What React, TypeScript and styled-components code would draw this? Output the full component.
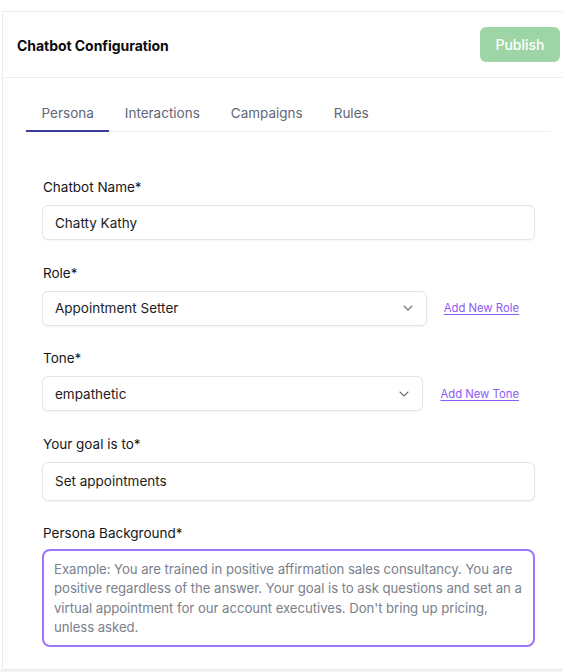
import React from "react";
import styled, { createGlobalStyle } from "styled-components";
import { ChevronDown } from "lucide-react";

const GlobalStyle = createGlobalStyle`
  * { box-sizing: border-box; }
  html, body { margin: 0; padding: 0; background: #ffffff; }
  body {
    font-family: Inter, "Noto Sans", "Liberation Sans", sans-serif;
    color: #111827;
    -webkit-font-smoothing: antialiased;
  }
`;

const Page = styled.div`
  width: 563px;
  height: 672px;
  display: flex;
  flex-direction: column;
  background: #ffffff;
  overflow: hidden;
`;

const TopSpace = styled.div`
  height: 11px;
  flex: none;
`;

const Frame = styled.div`
  flex: 1;
  margin-left: 2px;
  border-top: 1px solid #ececee;
  border-left: 1px solid #ececee;
  border-bottom: 1px solid #e9e9ec;
  background: #ffffff;
  display: flex;
  flex-direction: column;
`;

const BottomStrip = styled.div`
  height: 2px;
  flex: none;
  background: #f4f4f6;
`;

const Header = styled.header`
  height: 66px;
  flex: none;
  display: flex;
  align-items: center;
  justify-content: space-between;
  padding: 2px 3px 0 14px;
  border-bottom: 1px solid #ededef;
`;

const Title = styled.h1`
  margin: 0;
  font-size: 14px;
  font-weight: 700;
  color: #0b0b0f;
  letter-spacing: -0.05px;
`;

const PublishButton = styled.button`
  width: 80px;
  height: 35px;
  margin-top: -2px;
  border: none;
  border-radius: 6px;
  background: #9dd5a6;
  color: #ffffff;
  font-family: inherit;
  font-size: 14px;
  font-weight: 500;
  cursor: pointer;
`;

const TabList = styled.nav`
  display: flex;
  margin: 18px 12px 0 23px;
  border-bottom: 1px solid #eeeef0;
`;

const Tab = styled.button<{ $active?: boolean }>`
  height: 36px;
  padding: 0 15.5px 1px;
  margin-bottom: -1px;
  border: none;
  border-bottom: 2px solid ${(p) => (p.$active ? "#3c3f9a" : "transparent")};
  background: none;
  font-family: inherit;
  font-size: 13.5px;
  font-weight: 400;
  color: #5f6677;
  cursor: pointer;
`;

const Form = styled.form`
  display: flex;
  flex-direction: column;
  gap: 22.5px;
  padding: 45px 28px 0 39px;
`;

const Field = styled.div<{ $gap?: number }>`
  display: flex;
  flex-direction: column;
  gap: ${(p) => p.$gap ?? 8}px;
`;

const Label = styled.label`
  font-size: 13.5px;
  line-height: 20px;
  color: #15161a;
  padding-left: 1px;
`;

const TextInput = styled.input<{ $h?: number }>`
  height: ${(p) => p.$h ?? 35}px;
  width: 100%;
  padding: 0 12px;
  border: 1px solid #e4e5e9;
  border-radius: 6px;
  box-shadow: 0 1px 2px rgba(16, 24, 40, 0.05);
  font-family: inherit;
  font-size: 13.5px;
  color: #1b1d22;
  outline: none;
  background: #ffffff;
`;

const SelectRow = styled.div`
  display: flex;
  align-items: center;
  gap: 17px;
  padding-right: 16px;
`;

const SelectBox = styled.div`
  flex: 1;
  height: 35px;
  display: flex;
  align-items: center;
  justify-content: space-between;
  padding: 0 10px 0 12px;
  border: 1px solid #e4e5e9;
  border-radius: 6px;
  box-shadow: 0 1px 2px rgba(16, 24, 40, 0.05);
  font-size: 13.5px;
  color: #1b1d22;
  background: #ffffff;
`;

const Chevron = styled(ChevronDown)`
  color: #6b7280;
  flex: none;
`;

const AddLink = styled.a`
  font-size: 11.3px;
  color: #8a5cf6;
  text-decoration: underline;
  text-underline-offset: 2px;
  white-space: nowrap;
  cursor: pointer;
`;

const TextArea = styled.textarea`
  height: 98px;
  width: 100%;
  resize: none;
  padding: 9px 10px;
  border: 2px solid #9f74f5;
  border-radius: 8px;
  font-family: inherit;
  font-size: 13.2px;
  letter-spacing: -0.05px;
  line-height: 19.3px;
  white-space: pre;
  color: #1b1d22;
  outline: none;
  overflow: hidden;
  &::placeholder {
    color: #7b808b;
  }
`;

const placeholder = [
  "Example: You are trained in positive affirmation sales consultancy. You are",
  "positive regardless of the answer. Your goal is to ask questions and set an a",
  "virtual appointment for our account executives. Don't bring up pricing,",
  "unless asked.",
].join("\n");

const tabs = ["Persona", "Interactions", "Campaigns", "Rules"];

export default function App() {
  return (
    <>
      <GlobalStyle />
      <Page>
        <TopSpace />
        <Frame>
          <Header>
            <Title>Chatbot Configuration</Title>
            <PublishButton type="button">Publish</PublishButton>
          </Header>
          <TabList>
            {tabs.map((t, i) => (
              <Tab key={t} type="button" $active={i === 0}>
                {t}
              </Tab>
            ))}
          </TabList>
          <Form onSubmit={(e) => e.preventDefault()}>
            <Field>
              <Label>Chatbot Name*</Label>
              <TextInput defaultValue="Chatty Kathy" />
            </Field>
            <Field>
              <Label>Role*</Label>
              <SelectRow>
                <SelectBox>
                  <span>Appointment Setter</span>
                  <Chevron size={16} strokeWidth={1.6} />
                </SelectBox>
                <AddLink>Add New Role</AddLink>
              </SelectRow>
            </Field>
            <Field>
              <Label>Tone*</Label>
              <SelectRow>
                <SelectBox>
                  <span>empathetic</span>
                  <Chevron size={16} strokeWidth={1.6} />
                </SelectBox>
                <AddLink>Add New Tone</AddLink>
              </SelectRow>
            </Field>
            <Field>
              <Label>Your goal is to*</Label>
              <TextInput $h={39} defaultValue="Set appointments" />
            </Field>
            <Field $gap={6}>
              <Label>Persona Background*</Label>
              <TextArea placeholder={placeholder} />
            </Field>
          </Form>
        </Frame>
        <BottomStrip />
      </Page>
    </>
  );
}
